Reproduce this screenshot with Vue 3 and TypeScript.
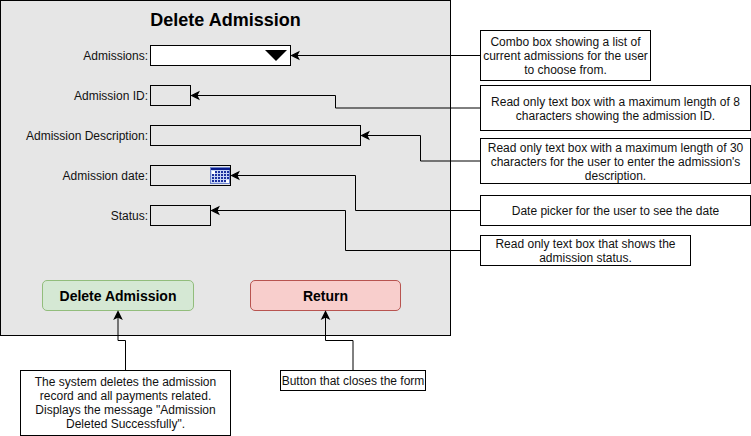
<script setup lang="ts">
interface Field {
  label: string
  kind: 'combo' | 'id' | 'description' | 'date' | 'status'
}

interface Note {
  name: string
  lines: string[]
}

interface Connector {
  line: string
  x: number
  y: number
  angle: number
}

const fields: Field[] = [
  { label: 'Admissions:', kind: 'combo' },
  { label: 'Admission ID:', kind: 'id' },
  { label: 'Admission Description:', kind: 'description' },
  { label: 'Admission date:', kind: 'date' },
  { label: 'Status:', kind: 'status' },
]

const sideNotes: Note[] = [
  { name: 'note-combo', lines: ['Combo box showing a list of', 'current admissions for the user', 'to choose from.'] },
  { name: 'note-id', lines: ['Read only text box with a maximum length of 8', 'characters showing the admission ID.'] },
  { name: 'note-description', lines: ['Read only text box with a maximum length of 30', "characters for the user to enter the admission's", 'description.'] },
  { name: 'note-date', lines: ['Date picker for the user to see the date'] },
  { name: 'note-status', lines: ['Read only text box that shows the', 'admission status.'] },
]

const bottomNotes: Note[] = [
  { name: 'note-delete', lines: ['The system deletes the admission', 'record and all payments related.', 'Displays the message "Admission', 'Deleted Successfully".'] },
  { name: 'note-return', lines: ['Button that closes the form'] },
]

// x/y is the arrow tip; angle 0 points left, 90 points up
const connectors: Connector[] = [
  { line: 'M480 55.5H297', x: 291.6, y: 55.5, angle: 0 },
  { line: 'M480 108H335.5V95.5H197', x: 191.6, y: 95.5, angle: 0 },
  { line: 'M480 161H420.5V135.5H367', x: 361.6, y: 135.5, angle: 0 },
  { line: 'M480 210.5H355.5V175.5H237', x: 231.6, y: 175.5, angle: 0 },
  { line: 'M480 250.5H345.5V210.5H217', x: 211.6, y: 210.5, angle: 0 },
  { line: 'M125.5 370V340.5H118V317', x: 118, y: 311.6, angle: 90 },
  { line: 'M353 370V340.5H325.5V317', x: 325.5, y: 311.6, angle: 90 },
]
</script>

<template>
  <main class="page">
    <div class="top">
      <section class="form">
        <h1 class="title">Delete Admission</h1>
        <div v-for="f in fields" :key="f.kind" class="row">
          <span class="label">{{ f.label }}</span>
          <div class="box" :class="f.kind">
            <svg v-if="f.kind === 'combo'" class="caret" width="22" height="11" viewBox="0 0 22 11">
              <path d="M0 0H22L11 11Z" />
            </svg>
            <svg v-if="f.kind === 'date'" class="calendar" width="20" height="17" viewBox="0 0 20 17">
              <rect x="0.5" y="0.5" width="19" height="16" fill="#c9d6f6" stroke="#6d84cc" />
              <rect x="1" y="1" width="19" height="2" fill="#0a1c8c" />
              <g fill="#fff">
                <rect x="2" y="4" width="3" height="3" />
                <rect x="16" y="13" width="3" height="3" />
              </g>
              <g stroke="#1c309f" stroke-width="2" stroke-dasharray="2 1">
                <path d="M5 5H19M2 8H19M2 11H19M2 14H16" />
              </g>
            </svg>
          </div>
        </div>
        <div class="actions">
          <button class="btn delete" type="button">Delete Admission</button>
          <button class="btn return" type="button">Return</button>
        </div>
      </section>
      <aside class="side">
        <div v-for="n in sideNotes" :key="n.name" class="note" :class="n.name">
          <span v-for="l in n.lines" :key="l">{{ l }}</span>
        </div>
      </aside>
    </div>
    <div class="bottom">
      <div v-for="n in bottomNotes" :key="n.name" class="note" :class="n.name">
        <span v-for="l in n.lines" :key="l">{{ l }}</span>
      </div>
    </div>
    <svg class="connectors" width="751" height="436" viewBox="0 0 751 436">
      <g v-for="c in connectors" :key="c.line">
        <path :d="c.line" fill="none" stroke="#000" />
        <path
          d="M0 0L7 -3.5L5.25 0L7 3.5Z"
          stroke="#000"
          stroke-width="1.2"
          :transform="`translate(${c.x} ${c.y}) rotate(${c.angle})`"
        />
      </g>
    </svg>
  </main>
</template>

<style>
body {
  margin: 0;
  background: #fff;
}
</style>

<style scoped>
.page {
  position: relative;
  width: 751px;
  height: 436px;
  overflow: hidden;
  font-family: "Liberation Sans", Arial, sans-serif;
  font-size: 12px;
  line-height: 14px;
  color: #111;
}
.page * {
  box-sizing: border-box;
}
.top {
  display: flex;
  gap: 29px;
  height: 336px;
}
.form {
  width: 451px;
  height: 336px;
  border: 1px solid #000;
  background: #e6e6e6;
}
.title {
  margin: 0;
  padding: 9px 0 14px;
  font-size: 18px;
  line-height: 21px;
  text-align: center;
  color: #000;
}
.row {
  display: flex;
  align-items: center;
  gap: 2px;
  height: 21px;
  margin-bottom: 19px;
}
.label {
  width: 147px;
  font-size: 12px;
  text-align: right;
  white-space: nowrap;
}
.box {
  display: flex;
  justify-content: flex-end;
  height: 21px;
  border: 1px solid #000;
}
.combo {
  width: 141px;
  padding: 4px 3px 0 0;
  background: #fff;
}
.id {
  width: 41px;
}
.description {
  width: 211px;
}
.date {
  width: 81px;
  padding-top: 1px;
}
.status {
  width: 61px;
}
.actions {
  display: flex;
  gap: 56px;
  padding: 35px 0 0 41px;
}
.btn {
  width: 152px;
  height: 31px;
  padding: 0;
  border: 1px solid;
  border-radius: 5px;
  font: bold 14px/16px "Liberation Sans", Arial, sans-serif;
  color: #000;
}
.delete {
  border-color: #92bd7c;
  background: #d5e8d4;
}
.return {
  width: 151px;
  border-color: #b85450;
  background: #f8cecc;
}
.side {
  padding-top: 30px;
}
.note {
  display: flex;
  flex-direction: column;
  align-items: center;
  justify-content: center;
  width: 271px;
  border: 1px solid #000;
  background: #fff;
  white-space: nowrap;
}
.note-combo {
  width: 171px;
  height: 51px;
  margin-bottom: 4px;
}
.note-id {
  height: 46px;
  margin-bottom: 7px;
  padding-top: 1px;
}
.note-description {
  height: 46px;
  margin-bottom: 11px;
  padding-top: 1px;
}
.note-date {
  height: 31px;
  margin-bottom: 9px;
}
.note-status {
  width: 211px;
  height: 31px;
}
.bottom {
  display: flex;
  align-items: flex-start;
  gap: 49px;
  padding: 34px 0 0 20px;
}
.note-delete {
  width: 211px;
  height: 66px;
}
.note-return {
  width: 146px;
  height: 21px;
}
.connectors {
  position: absolute;
  inset: 0;
}
</style>
